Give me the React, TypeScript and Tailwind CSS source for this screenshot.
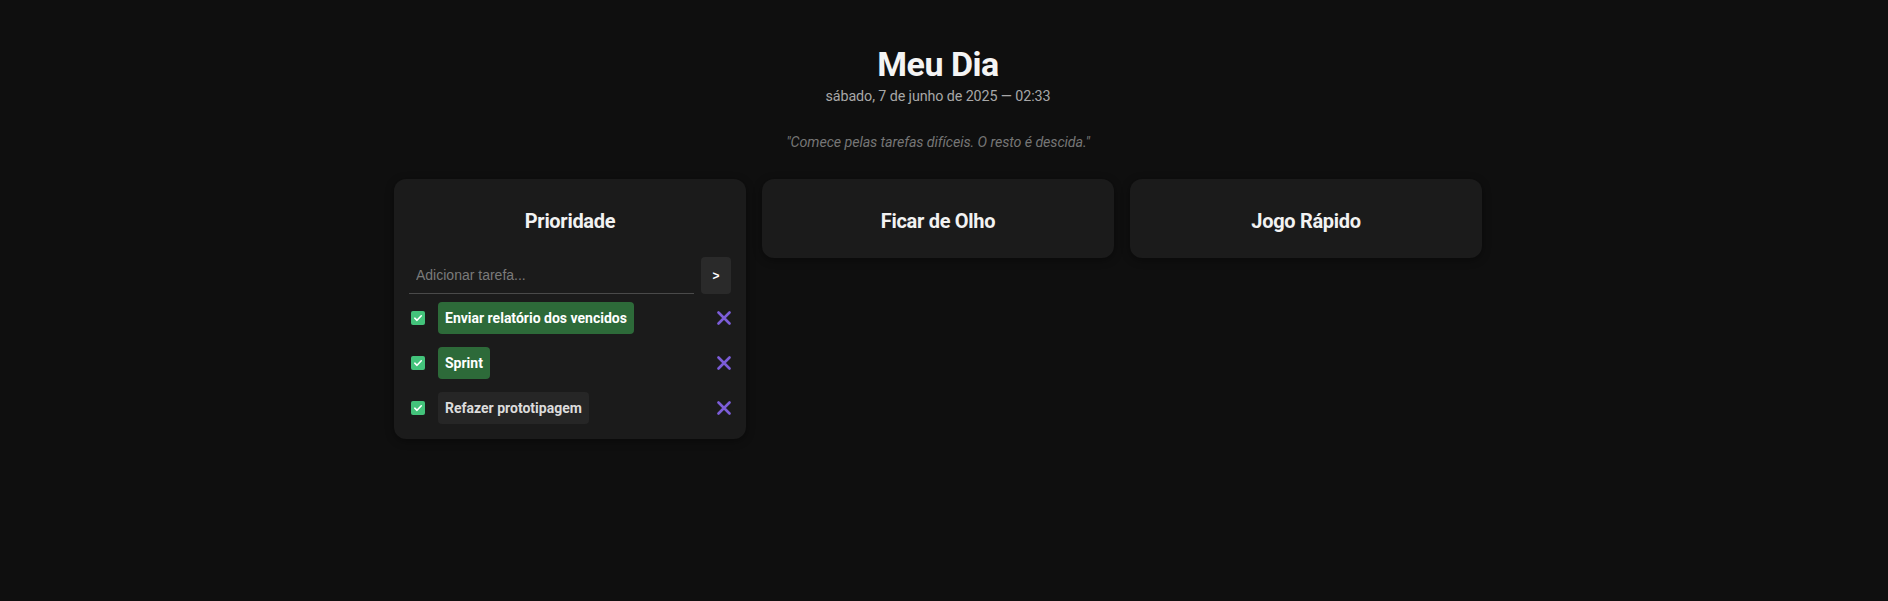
import React, { useState } from "react";

type Task = { id: number; text: string; done: boolean; highlight: boolean };

const font = "font-['Roboto',_'Noto_Sans',_sans-serif]";

function CheckBox({ checked }: { checked: boolean }) {
  return (
    <span
      className={`flex h-[14px] w-[14px] shrink-0 items-center justify-center rounded-[2px] ${
        checked ? "bg-[#43c37b]" : "border border-[#666]"
      }`}
    >
      {checked && (
        <svg width="10" height="10" viewBox="0 0 10 10" fill="none">
          <path
            d="M1.8 5.2 L4 7.3 L8.3 2.8"
            stroke="#ffffff"
            strokeWidth="1.6"
            strokeLinecap="round"
            strokeLinejoin="round"
          />
        </svg>
      )}
    </span>
  );
}

function TaskRow({ task }: { task: Task }) {
  return (
    <li className="flex h-[32px] items-center">
      <div className="flex w-[29px] shrink-0 items-center pl-[2px]">
        <CheckBox checked={task.done} />
      </div>
      <span
        className={`flex h-[32px] items-center rounded-[4px] px-[7px] text-[14px] font-bold ${
          task.highlight
            ? "bg-[#2d6a39] text-white"
            : "bg-[#262626] text-[#dcdcdc]"
        }`}
      >
        {task.text}
      </span>
      <button className="ml-auto flex h-[20px] w-[20px] items-center justify-end">
        <svg width="14" height="14" viewBox="0 0 14 14" fill="none">
          <path
            d="M1.5 1.5 L12.5 12.5 M12.5 1.5 L1.5 12.5"
            stroke="#7c5dd8"
            strokeWidth="2.6"
            strokeLinecap="round"
          />
        </svg>
      </button>
    </li>
  );
}

function Column({
  title,
  children,
}: {
  title: string;
  children?: React.ReactNode;
}) {
  return (
    <section className="flex w-[352px] flex-col rounded-xl bg-[#1b1b1b] px-[15px] pb-[15px] pt-[28px] shadow-[0_2px_8px_rgba(0,0,0,0.4)]">
      <h2 className="mb-[8px] h-[28px] text-center text-[20px] font-bold leading-[28px] tracking-[-0.3px] text-[#f2f2f2]">
        {title}
      </h2>
      {children}
    </section>
  );
}

export default function App() {
  const [draft, setDraft] = useState("");
  const [tasks] = useState<Task[]>([
    { id: 1, text: "Enviar relatório dos vencidos", done: true, highlight: true },
    { id: 2, text: "Sprint", done: true, highlight: true },
    { id: 3, text: "Refazer prototipagem", done: true, highlight: false },
  ]);

  return (
    <div className={`min-h-[601px] w-full bg-[#0f0f0f] ${font}`}>
      <div className="flex flex-col items-center pr-[12px] pt-[44px]">
        <h1 className="text-[34px] font-bold leading-[40px] tracking-[-0.5px] text-[#f4f4f4]">
          Meu Dia
        </h1>
        <p className="mt-[3px] text-[14.3px] leading-[18px] tracking-[-0.1px] text-[#a8a8a8]">
          sábado, 7 de junho de 2025 — 02:33
        </p>
        <p className="mt-[28px] text-[14.3px] italic leading-[18px] tracking-[-0.1px] text-[#767676]">
          "Comece pelas tarefas difíceis. O resto é descida."
        </p>

        <div className="mt-[28px] flex items-start gap-4">
          <Column title="Prioridade">
            <form
              className="mt-[14px] flex items-center gap-[7px]"
              onSubmit={(e) => e.preventDefault()}
            >
              <input
                value={draft}
                onChange={(e) => setDraft(e.target.value)}
                placeholder="Adicionar tarefa..."
                className="h-[37px] flex-1 border-b border-[#4a4a4a] bg-transparent px-[7px] font-['Liberation_Sans',_Arial,_sans-serif] text-[14px] text-[#ddd] outline-none placeholder:text-[#7a7a7a]"
              />
              <button
                type="submit"
                className="flex h-[37px] w-[30px] items-center justify-center rounded-[4px] bg-[#2a2a2a] font-['Liberation_Sans',_Arial,_sans-serif] text-[12px] font-bold text-white"
              >
                &gt;
              </button>
            </form>
            <ul className="mt-[8px] flex flex-col gap-[13px]">
              {tasks.map((t) => (
                <TaskRow key={t.id} task={t} />
              ))}
            </ul>
          </Column>
          <Column title="Ficar de Olho" />
          <Column title="Jogo Rápido" />
        </div>
      </div>
    </div>
  );
}
